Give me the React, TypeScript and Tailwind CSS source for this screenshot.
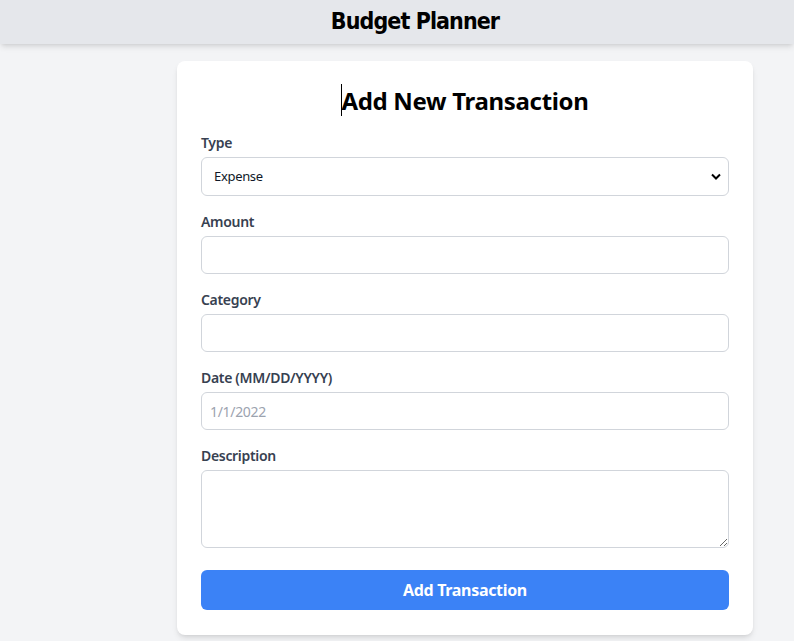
import { useState } from "react";

const labelCls = "block text-sm font-semibold text-[#374151] mb-1";
const inputCls =
  "w-full h-[38px] px-2 border border-[#d1d5db] rounded-md bg-white text-sm text-gray-900 placeholder-[#9ca3af] outline-none";

const App = () => {
  const [type, setType] = useState("Expense");

  return (
    <div className="min-h-[641px] bg-[#f3f4f6] font-['Noto_Sans','Open_Sans',sans-serif] tracking-[-0.02em]">
      <header className="h-11 bg-[#e5e7eb] shadow-md flex items-center justify-center pl-[36px]">
        <h1 className="text-[23px] font-bold text-black font-['DejaVu_Sans_Condensed','Liberation_Sans_Narrow',sans-serif] tracking-[-0.04em] mb-[2px]">
          Budget Planner
        </h1>
      </header>
      <main className="pt-[17px] pl-[177px]">
        <div className="w-[576px] bg-white rounded-lg shadow-md px-6 pt-6 pb-[25px]">
          <h2 className="text-2xl font-bold text-center text-black mb-4 leading-8">
            <span className="relative">
              <span className="absolute left-0 top-0 h-8 w-px bg-black" />
              Add New Transaction
            </span>
          </h2>
          <form className="flex flex-col gap-4" onSubmit={(e) => e.preventDefault()}>
            <div>
              <label className={labelCls}>Type</label>
              <div className="relative">
                <select
                  value={type}
                  onChange={(e) => setType(e.target.value)}
                  className={inputCls + " h-[39px] appearance-none pl-3 text-[13px] text-black"}
                >
                  <option>Expense</option>
                  <option>Income</option>
                </select>
                <svg
                  className="absolute right-[8px] top-[16px] pointer-events-none"
                  width="10"
                  height="7"
                  viewBox="0 0 10 7"
                >
                  <path d="M1 1.5 L5 5.5 L9 1.5" stroke="#000" strokeWidth="2" fill="none" />
                </svg>
              </div>
            </div>
            <div>
              <label className={labelCls}>Amount</label>
              <input type="text" className={inputCls} />
            </div>
            <div>
              <label className={labelCls}>Category</label>
              <input type="text" className={inputCls} />
            </div>
            <div>
              <label className={labelCls}>Date (MM/DD/YYYY)</label>
              <input type="text" placeholder="1/1/2022" className={inputCls} />
            </div>
            <div>
              <label className={labelCls}>Description</label>
              <textarea
                rows={3}
                className="block w-full h-[78px] px-2 py-2 border border-[#d1d5db] rounded-md bg-white text-sm outline-none"
              />
            </div>
            <button
              type="submit"
              className="mt-[6px] h-10 w-full bg-[#3b82f6] text-white font-bold rounded-md text-base"
            >
              Add Transaction
            </button>
          </form>
        </div>
      </main>
    </div>
  );
};

export default App;
